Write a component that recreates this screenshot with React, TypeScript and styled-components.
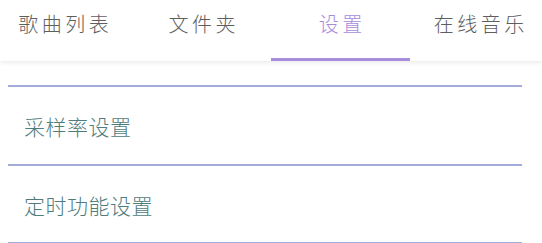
import React, { useState } from 'react';
import styled, { createGlobalStyle } from 'styled-components';

const GlobalStyle = createGlobalStyle`
  html, body {
    margin: 0;
    padding: 0;
    background: #fff;
    overflow: hidden;
  }
  body {
    font-family: "Noto Sans CJK SC", "Noto Sans", sans-serif;
  }
`;

const tabs = ['歌曲列表', '文件夹', '设置', '在线音乐'];
const settings = ['采样率设置', '定时功能设置'];

export default function App() {
  const [active, setActive] = useState(2);

  return (
    <Page>
      <GlobalStyle />
      <TabBar>
        {tabs.map((t, i) => (
          <Tab key={t} $active={i === active} onClick={() => setActive(i)}>
            {t}
          </Tab>
        ))}
      </TabBar>
      <SettingsList>
        {settings.map((s) => (
          <SettingItem key={s}>{s}</SettingItem>
        ))}
      </SettingsList>
    </Page>
  );
}

const Page = styled.div`
  width: 542px;
  height: 243px;
  background: #fff;
  overflow: hidden;
`;

const TabBar = styled.div`
  display: flex;
  justify-content: center;
  height: 61px;
  background: #fff;
  box-shadow: 0 2px 4px rgba(0, 0, 0, 0.08);
  position: relative;
  z-index: 1;
`;

const Tab = styled.button<{ $active: boolean }>`
  flex: 0 0 138.5px;
  box-sizing: border-box;
  border: none;
  background: none;
  padding: 10px 0 0 4px;
  display: flex;
  align-items: flex-start;
  justify-content: center;
  font-family: "Noto Sans CJK SC", sans-serif;
  font-size: 20px;
  font-weight: 300;
  line-height: 28px;
  letter-spacing: 3.5px;
  color: ${(p) => (p.$active ? '#a88bdc' : '#5e5e5e')};
  border-bottom: 3px solid ${(p) => (p.$active ? '#a98ddd' : 'transparent')};
  cursor: pointer;
`;

const SettingsList = styled.div`
  display: flex;
  flex-direction: column;
  margin: 24px 20px 0 8px;
  border-top: 2px solid #a3abd8;
`;

const SettingItem = styled.div`
  height: 78.5px;
  display: flex;
  align-items: center;
  padding: 2px 0 0 16px;
  box-sizing: border-box;
  border-bottom: 2px solid #a3abd8;
  font-family: "Noto Sans CJK SC", sans-serif;
  font-size: 21px;
  font-weight: 300;
  letter-spacing: 0.5px;
  color: #4f7c7c;
`;
